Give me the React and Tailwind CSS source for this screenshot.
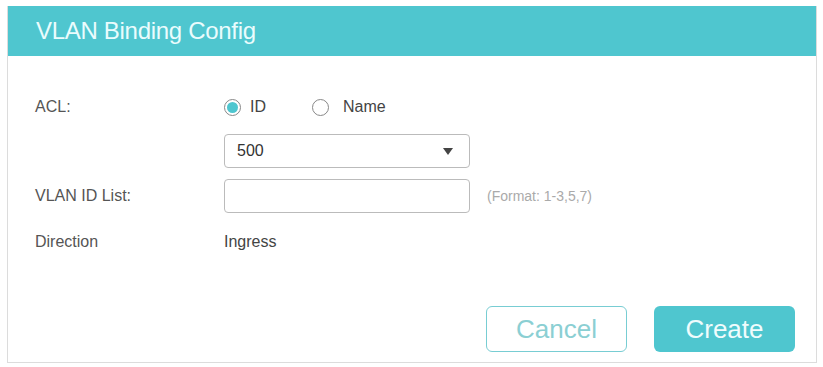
import React, { useState } from 'react';

export default function App() {
  const [mode, setMode] = useState('id');

  return (
    <div className="w-[823px] h-[367px] bg-white pt-[6px] pl-[7px]" style={{ fontFamily: '"Liberation Sans", Arial, sans-serif' }}>
      <div className="w-[810px] h-[357px] border border-[#dcdcdc] border-t-0 flex flex-col">
        <header className="h-[50px] bg-[#4fc6cf] flex items-center pl-[28px]">
          <h2 className="text-[24px] text-[#eafcfd] tracking-[-0.3px]">VLAN Binding Config</h2>
        </header>

        <div className="flex-1 flex flex-col pl-[27px] pt-[40px]">
          {/* ACL */}
          <div className="flex items-center h-[22px]">
            <span className="w-[189px] text-[16px] text-[#555]">ACL:</span>
            <label className="flex items-center gap-[9px] cursor-pointer" onClick={() => setMode('id')}>
              <span className="w-[17px] h-[17px] rounded-full border border-[#888] flex items-center justify-center">
                {mode === 'id' && <span className="w-[11px] h-[11px] rounded-full bg-[#4fc6cf]" />}
              </span>
              <span className="text-[16px] text-[#444]">ID</span>
            </label>
            <label className="flex items-center gap-[14px] ml-[46px] cursor-pointer" onClick={() => setMode('name')}>
              <span className="w-[17px] h-[17px] rounded-full border border-[#888] flex items-center justify-center">
                {mode === 'name' && <span className="w-[11px] h-[11px] rounded-full bg-[#4fc6cf]" />}
              </span>
              <span className="text-[16px] text-[#444]">Name</span>
            </label>
          </div>

          {/* Select */}
          <div className="flex items-center mt-[16px]">
            <span className="w-[189px]" />
            <div className="w-[246px] h-[34px] border border-[#bbb] rounded-[4px] flex items-center justify-between px-[12px]">
              <span className="text-[16px] text-[#333]">500</span>
              <svg width="10" height="7" viewBox="0 0 10 7" className="mr-[4px]">
                <path d="M0 0 L10 0 L5 7 Z" fill="#444" />
              </svg>
            </div>
          </div>

          {/* VLAN ID list */}
          <div className="flex items-center mt-[11px]">
            <span className="w-[189px] text-[16px] text-[#555]">VLAN ID List:</span>
            <input className="w-[246px] h-[34px] border border-[#bbb] rounded-[4px] outline-none px-[12px] text-[16px]" />
            <span className="ml-[17px] text-[14px] text-[#aaa]">(Format: 1-3,5,7)</span>
          </div>

          {/* Direction */}
          <div className="flex items-center mt-[17px]">
            <span className="w-[189px] text-[16px] text-[#555]">Direction</span>
            <span className="text-[16px] text-[#444]">Ingress</span>
          </div>

          <div className="flex justify-end gap-[27px] mt-[52px] pr-[21px]">
            <button className="w-[141px] h-[46px] rounded-[6px] border border-[#78cdd3] text-[26px] text-[#8bcfd3] bg-white">Cancel</button>
            <button className="w-[141px] h-[46px] rounded-[6px] bg-[#4fc6cf] text-[26px] text-[#f0fcfd]">Create</button>
          </div>
        </div>
      </div>
    </div>
  );
}
